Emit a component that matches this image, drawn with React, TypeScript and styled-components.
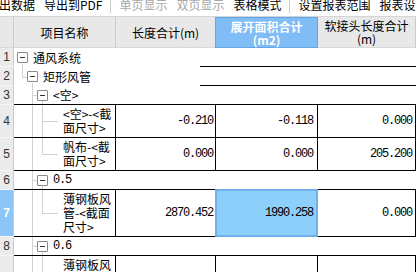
import React from 'react';
import styled, { createGlobalStyle } from 'styled-components';

const CJK = `"Noto Sans CJK SC", "Liberation Sans", sans-serif`;
const MONO = `"Liberation Mono", "DejaVu Sans Mono", monospace`;
const GUIDE = '#d2d2d2';

const GlobalStyle = createGlobalStyle`
  html, body { margin: 0; padding: 0; background: #fff; }
  body { font-family: ${CJK}; font-size: 12px; color: #000; }
`;

const Page = styled.div`
  width: 416px;
  height: 272px;
  overflow: hidden;
  background: #fff;
  font-family: ${CJK};
  font-size: 12px;
  color: #000;
`;

const Toolbar = styled.div`
  display: flex;
  align-items: flex-start;
  height: 16px;
  white-space: nowrap;
  overflow: hidden;
`;

const ToolItem = styled.span<{ $disabled?: boolean }>`
  display: block;
  flex: none;
  line-height: 12px;
  margin-top: -1px;
  padding-right: 9px;
  color: ${(p) => (p.$disabled ? '#a9a9a9' : '#000')};
  &:first-child { margin-left: -1px; }
`;

const ToolSep = styled.span`
  display: block;
  flex: none;
  width: 1px;
  height: 13px;
  background: #c8c8c8;
  margin: 0 9px 0 -2px;
`;

const HeaderRow = styled.div`
  display: flex;
  height: 32px;
  box-sizing: border-box;
  border-top: 1px solid #d5d5d5;
  background: #e8e8e8;
`;

const HeaderCorner = styled.div`
  width: 14px;
  flex: none;
  box-sizing: border-box;
  border-right: 1px solid #cbcbcb;
  border-bottom: 1px solid #d8d8d8;
`;

const HeaderCell = styled.div<{ $w?: number; $active?: boolean }>`
  ${(p) => (p.$w ? `width:${p.$w}px; flex:none;` : 'flex:1;')}
  box-sizing: border-box;
  display: flex;
  flex-direction: column;
  align-items: center;
  justify-content: center;
  line-height: 13px;
  text-align: center;
  white-space: nowrap;
  border-right: 1px solid #cbcbcb;
  border-bottom: 1px solid #d8d8d8;
  ${(p) =>
    p.$active &&
    `margin-left:-1px; width:${(p.$w || 0) + 1}px; background:#80bcf5; border:1px solid #62a6ea; color:#fff; font-weight:bold;`}
`;

const Row = styled.div<{ $h: number }>`
  display: flex;
  height: ${(p) => p.$h}px;
`;

const RowNum = styled.div<{ $active?: boolean }>`
  width: 14px;
  flex: none;
  box-sizing: border-box;
  border-right: 1px solid #cbcbcb;
  border-bottom: 1px solid #f6f6f6;
  background: ${(p) => (p.$active ? '#8cc6f8' : '#ebebeb')};
  color: ${(p) => (p.$active ? '#fff' : '#333')};
  font-weight: ${(p) => (p.$active ? 'bold' : 'normal')};
  font-family: "Liberation Sans", sans-serif;
  font-size: 12px;
  display: flex;
  align-items: center;
  justify-content: center;
`;

const GroupCell = styled.div<{ $line: boolean }>`
  width: 186px;
  flex: none;
  box-sizing: border-box;
  display: flex;
  align-items: center;
  padding-left: 3px;
  white-space: nowrap;
  border-bottom: ${(p) => (p.$line ? '1px solid #000' : 'none')};
`;

const GroupRest = styled.div`
  flex: 1;
  box-sizing: border-box;
  border-bottom: 1px solid #000;
`;

const NameCell = styled.div`
  width: 102px;
  flex: none;
  box-sizing: border-box;
  display: flex;
  align-items: center;
  padding-left: 3px;
  border-right: 1px solid #000;
  border-bottom: 1px solid #000;
`;

const NumCell = styled.div<{ $w?: number; $pr: number; $selected?: boolean }>`
  ${(p) => (p.$w ? `width:${p.$w}px; flex:none;` : 'flex:1;')}
  box-sizing: border-box;
  display: flex;
  align-items: center;
  justify-content: flex-end;
  padding-right: ${(p) => p.$pr}px;
  font-family: ${MONO};
  font-size: 12px;
  letter-spacing: -1.2px;
  border-right: 1px solid #000;
  border-bottom: 1px solid #000;
  ${(p) =>
    p.$selected &&
    `margin:-1px 0 0 -1px; width:${(p.$w || 0) + 1}px; background:#8ccffa; border:1px solid #6fb0ec; box-shadow: inset 0 0 0 1px #6fb0ec;`}
`;

type Guide = 'full' | 'top' | 'none';

const Slot = styled.span<{ $v: Guide; $branch?: boolean }>`
  position: relative;
  flex: none;
  width: 10px;
  align-self: stretch;
  &::before {
    content: '';
    position: absolute;
    left: 5px;
    top: 0;
    bottom: ${(p) => (p.$v === 'top' ? '50%' : '0')};
    border-left: 1px solid ${GUIDE};
    display: ${(p) => (p.$v === 'none' ? 'none' : 'block')};
  }
  &::after {
    content: '';
    position: absolute;
    left: 5px;
    right: 0;
    top: 50%;
    border-top: 1px solid ${GUIDE};
    display: ${(p) => (p.$branch ? 'block' : 'none')};
  }
`;

const Head = styled.span<{ $open?: boolean }>`
  position: relative;
  flex: none;
  width: 11px;
  margin-right: 5px;
  align-self: stretch;
  display: flex;
  align-items: center;
  &::after {
    content: '';
    position: absolute;
    left: 5px;
    top: calc(50% + 6px);
    bottom: 0;
    border-left: 1px solid ${GUIDE};
    display: ${(p) => (p.$open ? 'block' : 'none')};
  }
`;

const Toggle = styled.span`
  box-sizing: border-box;
  width: 11px;
  height: 11px;
  border: 1px solid #8a8a8a;
  border-radius: 1px;
  background: #fff;
  display: flex;
  align-items: center;
  justify-content: center;
  &::after {
    content: '';
    width: 5px;
    height: 1px;
    background: #333;
  }
`;

const LeafStub = styled.span`
  position: relative;
  flex: none;
  width: 16px;
  align-self: stretch;
  &::after {
    content: '';
    position: absolute;
    left: 0;
    width: 11px;
    top: 50%;
    border-top: 1px solid ${GUIDE};
  }
`;

const Label = styled.span<{ $mono?: boolean; $wrap?: boolean }>`
  flex: 1;
  min-width: 0;
  padding-right: 1px;
  line-height: 14px;
  white-space: ${(p) => (p.$wrap ? 'normal' : 'nowrap')};
  ${(p) => p.$mono && `font-family:${MONO}; letter-spacing:-1.2px;`}
`;

interface RowData {
  num: number;
  h: number;
  level: number;
  guides: Guide[];
  label: string;
  open?: boolean;
  leaf?: boolean;
  mono?: boolean;
  line?: boolean;
  values?: [string, string, string];
  selected?: number;
  active?: boolean;
}

const rows: RowData[] = [
  { num: 1, h: 19, level: 0, guides: [], label: '通风系统', open: true, line: false },
  { num: 2, h: 19, level: 1, guides: ['top'], label: '矩形风管', open: true, line: false },
  { num: 3, h: 19, level: 2, guides: ['none', 'full'], label: '<空>', open: true, line: true },
  { num: 4, h: 33, level: 3, guides: ['none', 'full', 'full'], label: '<空>-<截面尺寸>', leaf: true, values: ['-0.210', '-0.118', '0.000'] },
  { num: 5, h: 33, level: 3, guides: ['none', 'full', 'top'], label: '帆布-<截面尺寸>', leaf: true, values: ['0.000', '0.000', '205.200'] },
  { num: 6, h: 19, level: 2, guides: ['none', 'full'], label: '0.5', mono: true, open: true, line: true },
  { num: 7, h: 47, level: 3, guides: ['none', 'full', 'top'], label: '薄钢板风管-<截面尺寸>', leaf: true, values: ['2870.452', '1990.258', '0.000'], selected: 1, active: true },
  { num: 8, h: 19, level: 2, guides: ['none', 'full'], label: '0.6', mono: true, open: true, line: true },
  { num: 9, h: 47, level: 3, guides: ['none', 'full', 'full'], label: '薄钢板风管-<截面尺寸>', leaf: true, values: ['1523.600', '1183.742', '0.000'] },
];

const numCols: { w?: number; pr: number }[] = [
  { w: 100, pr: 2 },
  { w: 102, pr: 4 },
  { pr: 3 },
];

function TreeContent({ r }: { r: RowData }) {
  return (
    <>
      {r.guides.map((g, i) => (
        <Slot key={i} $v={g} $branch={i === r.guides.length - 1} />
      ))}
      {r.leaf ? (
        <LeafStub />
      ) : (
        <Head $open={r.open}>
          <Toggle />
        </Head>
      )}
      <Label $mono={r.mono} $wrap={r.leaf}>
        {r.label}
      </Label>
    </>
  );
}

export default function App() {
  return (
    <Page>
      <GlobalStyle />
      <Toolbar>
        <ToolItem>出数据</ToolItem>
        <ToolItem>导出到PDF</ToolItem>
        <ToolSep />
        <ToolItem $disabled>单页显示</ToolItem>
        <ToolItem $disabled>双页显示</ToolItem>
        <ToolItem>表格模式</ToolItem>
        <ToolSep />
        <ToolItem>设置报表范围</ToolItem>
        <ToolItem>报表设置</ToolItem>
      </Toolbar>
      <HeaderRow>
        <HeaderCorner />
        <HeaderCell $w={102}>项目名称</HeaderCell>
        <HeaderCell $w={100}>长度合计(m)</HeaderCell>
        <HeaderCell $w={102} $active>
          <span>展开面积合计</span>
          <span>(m2)</span>
        </HeaderCell>
        <HeaderCell>
          <span>软接头长度合计</span>
          <span>(m)</span>
        </HeaderCell>
      </HeaderRow>
      {rows.map((r) => (
        <Row key={r.num} $h={r.h}>
          <RowNum $active={r.active}>{r.num}</RowNum>
          {r.values ? (
            <>
              <NameCell>
                <TreeContent r={r} />
              </NameCell>
              {r.values.map((v, i) => (
                <NumCell key={i} $w={numCols[i].w} $pr={numCols[i].pr} $selected={r.selected === i}>
                  {v}
                </NumCell>
              ))}
            </>
          ) : (
            <>
              <GroupCell $line={!!r.line}>
                <TreeContent r={r} />
              </GroupCell>
              <GroupRest />
            </>
          )}
        </Row>
      ))}
    </Page>
  );
}
